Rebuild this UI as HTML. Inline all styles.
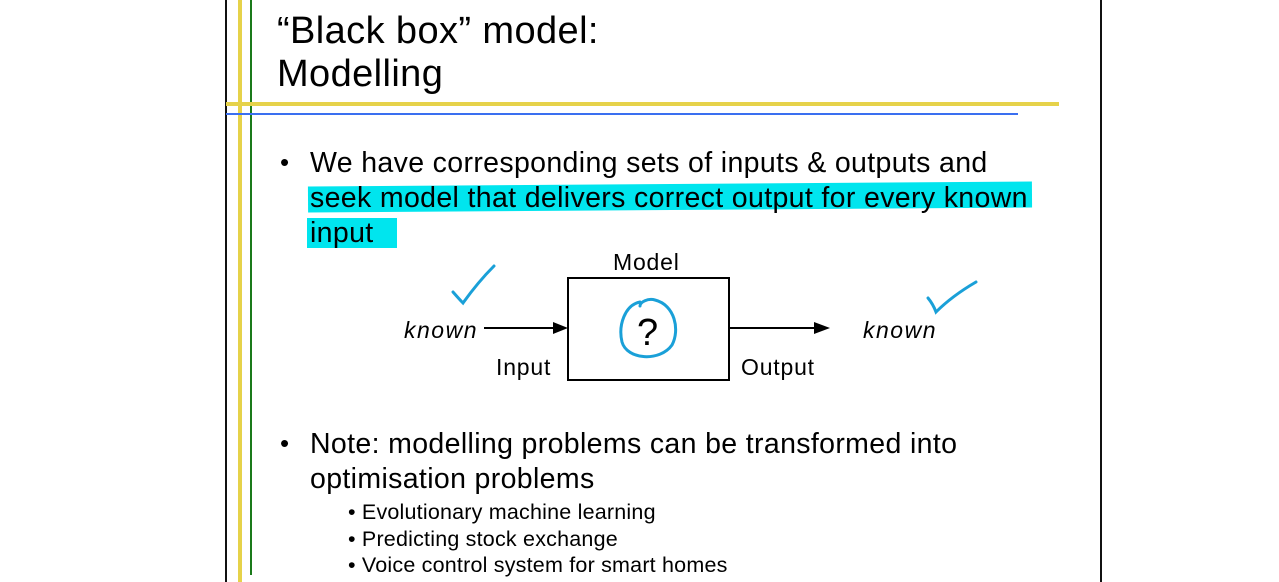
<!DOCTYPE html>
<html><head><meta charset="utf-8"><style>
body{margin:0;width:1279px;height:582px;background:#fff;position:relative;overflow:hidden;font-family:"Liberation Sans",Arial,sans-serif;color:#000}
.a{position:absolute;white-space:nowrap}
</style></head><body>
<div class="a" style="left:225px;top:0;width:2px;height:582px;background:#111"></div>
<div class="a" style="left:1100px;top:0;width:2px;height:582px;background:#111"></div>
<div class="a" style="left:238px;top:0;width:4px;height:582px;background:#e6d24a"></div>
<div class="a" style="left:250px;top:0;width:2px;height:575px;background:#1a7a1a"></div>
<div class="a" style="left:226px;top:102px;width:833px;height:4px;background:#e6d24a"></div>
<div class="a" style="left:226px;top:113px;width:792px;height:2px;background:#3a6ff0"></div>
<div class="a" style="left:277px;top:10px;font-size:38px;line-height:43px;letter-spacing:0.4px">“Black box” model:<br>Modelling</div>
<div class="a" style="left:308px;top:184px;width:724px;height:26px;background:#00e5ee;transform:rotate(-0.4deg)"></div>
<div class="a" style="left:307px;top:218px;width:90px;height:30px;background:#00e5ee"></div>
<div class="a" style="left:280px;top:145px;font-size:26px;line-height:35px">•</div>
<div class="a" style="left:310px;top:146px;font-size:28.5px;line-height:35px;letter-spacing:0.35px">We have corresponding sets of inputs &amp; outputs and<br>seek model that delivers correct output for every known<br>input</div>
<div class="a" style="left:280px;top:426px;font-size:26px;line-height:35px">•</div>
<div class="a" style="left:310px;top:427px;font-size:28.5px;line-height:35px;letter-spacing:0.35px">Note: modelling problems can be transformed into<br>optimisation problems</div>
<div class="a" style="left:348px;top:499px;font-size:21.5px;line-height:26.5px;letter-spacing:0.2px">• Evolutionary machine learning<br>• Predicting stock exchange<br>• Voice control system for smart homes</div>
<svg class="a" style="left:0;top:0" width="1279" height="582">
<rect x="568" y="278" width="161" height="102" fill="none" stroke="#000" stroke-width="2"/>
<line x1="484" y1="328" x2="558" y2="328" stroke="#000" stroke-width="2"/><polygon points="568,328 553,322 553,334"/>
<line x1="730" y1="328" x2="818" y2="328" stroke="#000" stroke-width="2"/><polygon points="830,328 814,322 814,334"/>
<g font-size="23" letter-spacing="0.8">
<text x="613" y="270">Model</text>
<text x="496" y="375">Input</text>
<text x="741" y="375">Output</text>
<text x="404" y="338" font-style="italic" letter-spacing="1.5">known</text>
<text x="863" y="338" font-style="italic" letter-spacing="1.5">known</text>
</g>
<text x="637" y="345" font-size="38">?</text>
<g fill="none" stroke="#1aa0d8" stroke-width="3" stroke-linecap="round">
<path d="M453 292 Q460 300 463 303 Q478 282 494 266"/>
<path d="M928 298 Q933 304 936 312 Q952 296 976 282"/>
<path d="M640 302 C625 305 618 325 622 342 C627 360 660 362 672 345 C680 330 675 305 655 300 C648 298 640 302 640 306"/>
</g>
</svg>
</body></html>
